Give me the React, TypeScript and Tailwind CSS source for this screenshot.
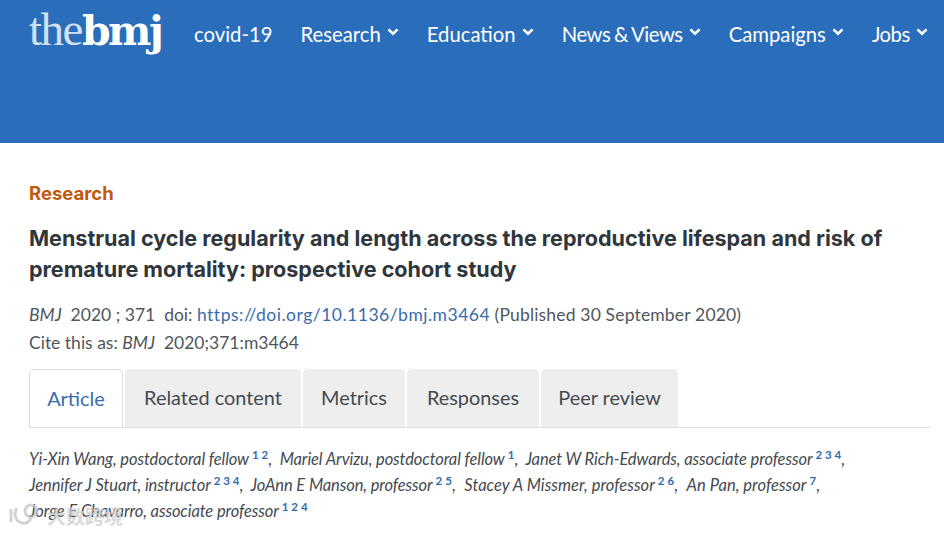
import React from "react";

const Chevron = () => (
  <svg width="12" height="8" viewBox="0 0 12 8" className="ml-[6px] mb-[5px] shrink-0" fill="none">
    <path d="M1.4 1.4 6 5.8 10.6 1.4" stroke="#fff" strokeWidth="2.6" />
  </svg>
);

const Nav = ({ label, chevron = true, extra = "" }: { label: string; chevron?: boolean; extra?: string }) => (
  <a className={`flex items-center text-[20.3px] leading-none text-white whitespace-nowrap ${extra}`}>
    {label}
    {chevron && <Chevron />}
  </a>
);

const Sup = ({ children }: { children: React.ReactNode }) => (
  <sup className="not-italic text-[11.5px] font-bold text-[#2f6cb3] ml-[3px] tracking-[0.3px] [word-spacing:-0.5px] top-[-6px] relative align-baseline leading-none">
    {children}
  </sup>
);

const Tab = ({ label, w, active }: { label: string; w: string; active?: boolean }) => (
  <div
    className={
      active
        ? `flex h-[58px] items-center justify-center rounded-t-[5px] border border-b-0 border-[#dddddd] bg-white text-[#3a6cac] mb-[-1px] relative ${w}`
        : `flex h-[58px] items-center justify-center rounded-t-[5px] bg-[#eeeeee] text-[#444a50] ${w}`
    }
  >
    {label}
  </div>
);

export default function App() {
  return (
    <div className="relative h-[534px] w-[944px] overflow-hidden bg-white font-['Lato',sans-serif] text-[#333b42]">
      <header className="h-[143px] bg-[#2a6ebb]">
        <div className="flex items-start pl-[29px] pt-[6px]">
          <div className="flex h-[46px] w-[136px] items-baseline font-['Liberation_Serif',serif] text-[47px] leading-[46px] tracking-[-1.5px] text-[#d3e1f1]">
            <span className="font-normal">the</span>
            <span className="font-['DejaVu_Serif',serif] text-[41px] font-bold tracking-[-2.5px] text-white">bmj</span>
          </div>
          <nav className="ml-[29px] flex items-center gap-[28px] pt-[18px]">
            <Nav label="covid-19" chevron={false} />
            <Nav label="Research" />
            <Nav label="Education" />
            <Nav label="News & Views" extra="tracking-[-0.45px] [word-spacing:-1px]" />
            <Nav label="Campaigns" />
            <Nav label="Jobs" extra="tracking-[-0.5px]" />
          </nav>
        </div>
      </header>

      <main className="pl-[29px] pr-[14px]">
        <div className="pt-[39px] font-['Inter',sans-serif] text-[18.5px] font-bold leading-[22px] text-[#c05a10]">Research</div>
        <h1 className="mt-[19px] font-['Inter',sans-serif] text-[21.55px] font-bold leading-[31px] text-[#2f363c]">
          Menstrual cycle regularity and length across the reproductive lifespan and risk of
          <br />
          premature mortality: prospective cohort study
        </h1>
        <div className="mt-[16px] text-[17.5px] leading-[28px] text-[#50565c]">
          <div className="whitespace-nowrap">
            <i>BMJ</i>&nbsp; 2020 ; 371 &nbsp;doi: <a className="text-[#3a6cac] tracking-[0.5px]">https://doi.org/10.1136/bmj.m3464</a> <span className="tracking-[0.17px]">(Published 30 September 2020)</span>
          </div>
          <div className="whitespace-nowrap">
            Cite this as: <i>BMJ</i>&nbsp; 2020;371:m3464
          </div>
        </div>

        <div className="mt-[12px] flex gap-[2px] border-b border-[#dddddd] text-[19.9px]">
          <Tab label="Article" w="w-[94px]" active />
          <Tab label="Related content" w="w-[176px]" />
          <Tab label="Metrics" w="w-[102px]" />
          <Tab label="Responses" w="w-[132px]" />
          <Tab label="Peer review" w="w-[137px]" />
        </div>

        <div className="mt-[18px] text-[16.5px] italic leading-[26px] text-[#444a50] whitespace-nowrap tracking-[-0.1px]">
          <div>
            Yi-Xin Wang, postdoctoral fellow<Sup>1 2</Sup>,&nbsp; Mariel Arvizu, postdoctoral fellow<Sup>1</Sup>,&nbsp; Janet W Rich-Edwards, associate professor<Sup>2 3 4</Sup>,
          </div>
          <div>
            Jennifer J Stuart, instructor<Sup>2 3 4</Sup>,&nbsp; JoAnn E Manson, professor<Sup>2 5</Sup>,&nbsp; <span className="ml-[1px] tracking-[0.05px]">Stacey A Missmer, professor</span><Sup>2 6</Sup>,&nbsp; <span className="ml-[1px] tracking-[0.05px]">An Pan, professor</span><Sup>7</Sup>,
          </div>
          <div>
            Jorge E Chavarro, associate professor<Sup>1 2 4</Sup>
          </div>
        </div>
      </main>

      <div className="absolute left-[8px] top-[503px] flex items-center gap-[5px] opacity-80">
        <svg width="34" height="24" viewBox="0 0 34 24" fill="none" stroke="#c9c9c9" strokeWidth="3">
          <path d="M3 6v13" />
          <path d="M9 5c-3 4-3 13 5 15 6 1 9-3 9-7" />
          <circle cx="23" cy="8" r="6" />
        </svg>
        <span className="font-['Noto_Sans_CJK_SC',sans-serif] text-[19px] font-bold leading-none text-[#d0d0d0]">
          大数跨境
        </span>
      </div>
    </div>
  );
}
